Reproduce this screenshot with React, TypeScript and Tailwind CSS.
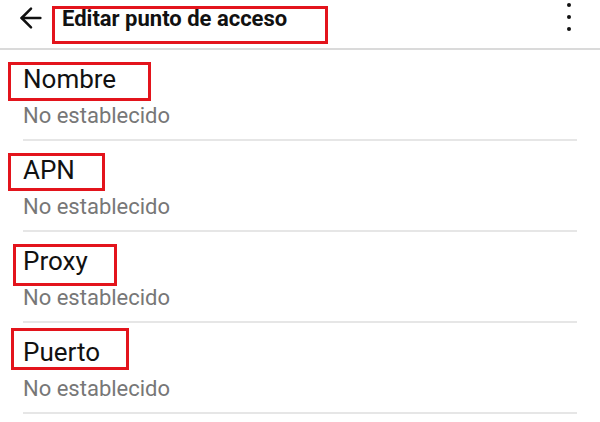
import { ArrowLeft } from "lucide-react";

const items = [
  { label: "Nombre", box: "left-[8px] top-[12px] w-[143px] h-[39px]" },
  { label: "APN", box: "left-[8px] top-[12px] w-[97px] h-[38px]" },
  { label: "Proxy", box: "left-[13px] top-[12px] w-[104px] h-[42px]" },
  { label: "Puerto", box: "left-[11px] top-[5px] w-[118px] h-[42px]" },
];

export default function App() {
  return (
    <div className="w-[600px] h-[422px] bg-white overflow-hidden font-['Roboto',sans-serif]">
      <header className="relative h-[50px] border-b-2 border-[#dadada] flex items-start">
        <ArrowLeft className="ml-[15px] mt-[2px] w-[32px] h-[32px] shrink-0 text-[#111]" strokeWidth={1.9} />
        <h1 className="ml-[15px] mt-[6px] text-[22px] leading-[26px] font-bold text-[#111]">Editar punto de acceso</h1>
        <div className="absolute left-[52px] top-[6px] w-[276px] h-[38px] border-[3px] border-[#e3141c]" />
        <div className="ml-auto mr-[29px] mt-[3px] flex flex-col items-center gap-[8px]">
          <span className="w-[4px] h-[4px] rounded-full bg-[#111]" />
          <span className="w-[4px] h-[4px] rounded-full bg-[#111]" />
          <span className="w-[4px] h-[4px] rounded-full bg-[#111]" />
        </div>
      </header>
      <div className="pl-[23px] pr-[23px]">
        {items.map((it) => (
          <div key={it.label} className="relative h-[91px] border-b-2 border-[#e6e6e6] pt-[14px]">
            <div className="text-[26px] leading-[30px] text-[#111]">{it.label}</div>
            <div className="mt-[9px] text-[22px] leading-[26px] text-[#777]">No establecido</div>
            <div className={`absolute -ml-[23px] border-[3px] border-[#e3141c] ${it.box}`} />
          </div>
        ))}
      </div>
    </div>
  );
}
